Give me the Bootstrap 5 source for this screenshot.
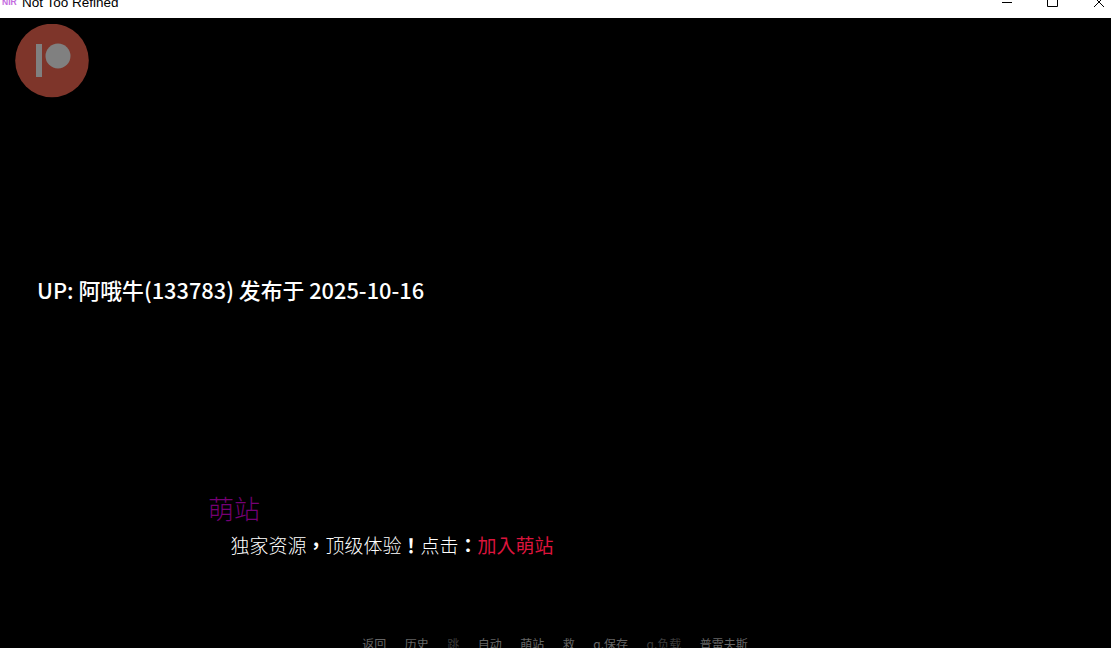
<!DOCTYPE html>
<html lang="zh-CN">
<head>
  <meta charset="UTF-8">
  <meta name="viewport" content="width=device-width, initial-scale=1.0">
  <title>Not Too Refined</title>
  <link href="https://cdn.jsdelivr.net/npm/bootstrap@5.3.0/dist/css/bootstrap.min.css" rel="stylesheet">
  <style>
    html, body { height: 648px; overflow: hidden; background: #000; }
    .title-strip { height: 18px; background: #fff; overflow: hidden; color: #000; font-family: "Liberation Sans", sans-serif; font-size: 13.5px; line-height: 18px; }
    .title-logo { width: 22px; padding-left: 2px; margin-top: -5px; font-size: 8.5px; font-weight: 700; color: #c46be0; line-height: 14px; }
    .title-name { margin-top: -6px; line-height: 18px; }
    .win-btn { width: 46px; height: 18px; }
    .win-btn-end { width: 20px; height: 18px; overflow: hidden; }
    .stage { height: 630px; background: #000; font-family: "Noto Sans CJK SC", sans-serif; overflow: hidden; }
    .patreon-wrap { padding: 6px 0 0 15px; height: 79px; }
    .up-line { margin: 178px 0 0 37px; color: #fff; font-size: 21.8px; line-height: 30px; font-weight: 500; height: 30px; white-space: nowrap; }
    .promo { margin: 187px 0 0 208px; height: 108px; }
    .promo-title { color: #750075; font-size: 26px; line-height: 32px; font-weight: 300; }
    .promo-text { margin: 8px 0 0 22.5px; color: #fff; font-family: "Noto Sans CJK TC", sans-serif; font-size: 19px; line-height: 26px; font-weight: 300; white-space: nowrap; }
    .promo-punct { font-weight: 700; }
    .promo-link { color: #dc143c; font-weight: 400; }
    .quick-menu { gap: 18.5px; margin-top: 36px; padding-right: 1px; font-size: 12px; line-height: 16px; color: #666; white-space: nowrap; }
    .quick-off { color: #3c3c3c; }
  </style>
</head>
<body>
  <div class="title-strip d-flex">
    <div class="title-logo">NIR</div>
    <div class="title-name flex-grow-1">Not Too Refined</div>
    <div class="d-flex">
      <div class="win-btn">
        <svg width="46" height="18" viewBox="0 0 46 18"><path d="M3 2.5H13" stroke="#000" fill="none"/></svg>
      </div>
      <div class="win-btn">
        <svg width="46" height="18" viewBox="0 0 46 18"><path d="M2.5 -3.5H12.5V6.5H2.5Z" stroke="#000" fill="none"/></svg>
      </div>
      <div class="win-btn-end">
        <svg width="20" height="18" viewBox="0 0 20 18"><path d="M3 -3L13 7M13 -3L3 7" stroke="#000" fill="none"/></svg>
      </div>
    </div>
  </div>

  <div class="stage">
    <div class="patreon-wrap">
      <svg width="74" height="74" viewBox="0 0 74 74">
        <circle cx="37" cy="36.5" r="36.8" fill="#7e352a"/>
        <rect x="21" y="20" width="6" height="33" fill="#808080"/>
        <circle cx="43" cy="32" r="12.5" fill="#808080"/>
      </svg>
    </div>
    <div class="up-line">UP: 阿哦牛(133783) 发布于 2025-10-16</div>
    <div class="promo">
      <div class="promo-title">萌站</div>
      <div class="promo-text" lang="zh-TW">独家资源<span class="promo-punct">，</span>顶级体验<span class="promo-punct">！</span>点击<span class="promo-punct">：</span><span class="promo-link">加入萌站</span></div>
    </div>
    <div class="quick-menu d-flex justify-content-center">
      <span>返回</span>
      <span>历史</span>
      <span class="quick-off">跳</span>
      <span>自动</span>
      <span>萌站</span>
      <span>救</span>
      <span>q.保存</span>
      <span class="quick-off">q.负载</span>
      <span>普雷夫斯</span>
    </div>
  </div>

  <script src="https://cdn.jsdelivr.net/npm/bootstrap@5.3.0/dist/js/bootstrap.bundle.min.js"></script>
</body>
</html>
